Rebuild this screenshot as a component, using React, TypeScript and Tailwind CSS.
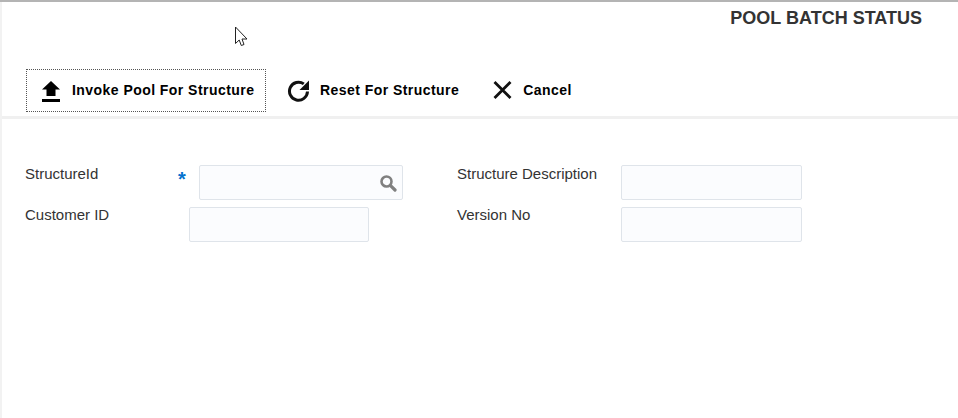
export default function App() {
  return (
    <div className="relative h-[418px] w-[958px] overflow-hidden bg-white font-['Liberation_Sans',Arial,sans-serif] text-[#333]">
      <div className="h-[2px] bg-[#b4b4b4]" />
      <div className="h-[416px] border-l-2 border-[#f2f2f2]">
        {/* title */}
        <div className="flex h-[30px] justify-end pr-[36px] pt-[5px]">
          <h1 className="text-[18px] leading-[22px] font-bold text-[#333]">POOL BATCH STATUS</h1>
        </div>

        {/* toolbar */}
        <div className="flex h-[87px] items-start border-b-[3px] border-[#f0f0f0] pl-[24px] pt-[37px] text-[14px] font-bold tracking-[0.45px] text-black">
          <button className="flex h-[43px] w-[240px] items-center border border-dotted border-[#555] pl-[13px]">
            <svg width="22" height="24" viewBox="0 0 22 24" className="mr-[10px]">
              <path d="M11 2 L20 10.5 H15.5 V17 H6.5 V10.5 H2 Z" fill="#000" />
              <rect x="2" y="20" width="18" height="3" fill="#000" />
            </svg>
            <span>Invoke Pool For Structure</span>
          </button>
          <button className="ml-[21px] flex h-[43px] items-center">
            <svg width="24" height="24" viewBox="0 0 24 24" className="mr-[9px]">
              <path d="M20.5 12.5 A9 9 0 1 1 16.8 4.9" fill="none" stroke="#111" strokeWidth="3" />
              <path d="M22 1.5 V11 H12.5 Z" fill="#111" />
            </svg>
            <span>Reset For Structure</span>
          </button>
          <button className="ml-[31px] flex h-[43px] items-center">
            <svg width="23" height="22" viewBox="0 0 23 22" className="mr-[10px]">
              <path d="M4.5 2 L20.5 18 M20.5 2 L4.5 18" stroke="#111" strokeWidth="2.8" fill="none" />
            </svg>
            <span>Cancel</span>
          </button>
        </div>

        {/* form */}
        <div className="grid grid-cols-[432px_1fr] pl-[23px] pt-[46px] text-[15px] leading-[20px]">
          <div className="flex h-[42px]">
            <label className="-mt-[1px] w-[153px]">StructureId</label>
            <span className="w-[21px] pt-[4px] text-[20px] font-bold text-[#0572ce]">*</span>
            <div className="flex h-[35px] w-[204px] items-center justify-end rounded-[2px] border border-[#dfe4ea] bg-[#fbfcfe] pr-[5px]">
              <svg width="18" height="18" viewBox="0 0 18 18">
                <circle cx="7.5" cy="7.5" r="5" fill="none" stroke="#808080" strokeWidth="2.6" />
                <path d="M11.3 11.3 L16 16" stroke="#808080" strokeWidth="3.2" strokeLinecap="round" />
              </svg>
            </div>
          </div>
          <div className="flex h-[42px]">
            <label className="-mt-[1px] w-[164px]">Structure Description</label>
            <div className="h-[35px] w-[181px] rounded-[2px] border border-[#dfe4ea] bg-[#fbfcfe]" />
          </div>
          <div className="flex h-[42px]">
            <label className="-mt-[2px] w-[164px]">Customer ID</label>
            <div className="h-[35px] w-[180px] rounded-[2px] border border-[#dfe4ea] bg-[#fbfcfe]" />
          </div>
          <div className="flex h-[42px]">
            <label className="-mt-[2px] w-[164px]">Version No</label>
            <div className="h-[35px] w-[181px] rounded-[2px] border border-[#dfe4ea] bg-[#fbfcfe]" />
          </div>
        </div>
      </div>

      {/* mouse pointer captured in the screenshot */}
      <svg width="14" height="21" viewBox="0 0 14 21" className="absolute left-[234px] top-[26px]">
        <path d="M1.5 1 V17.5 L5.2 14 L7.3 19.5 L10 18.5 L8 13 H13 Z" fill="#fff" stroke="#222" strokeWidth="1" />
      </svg>
    </div>
  );
}
